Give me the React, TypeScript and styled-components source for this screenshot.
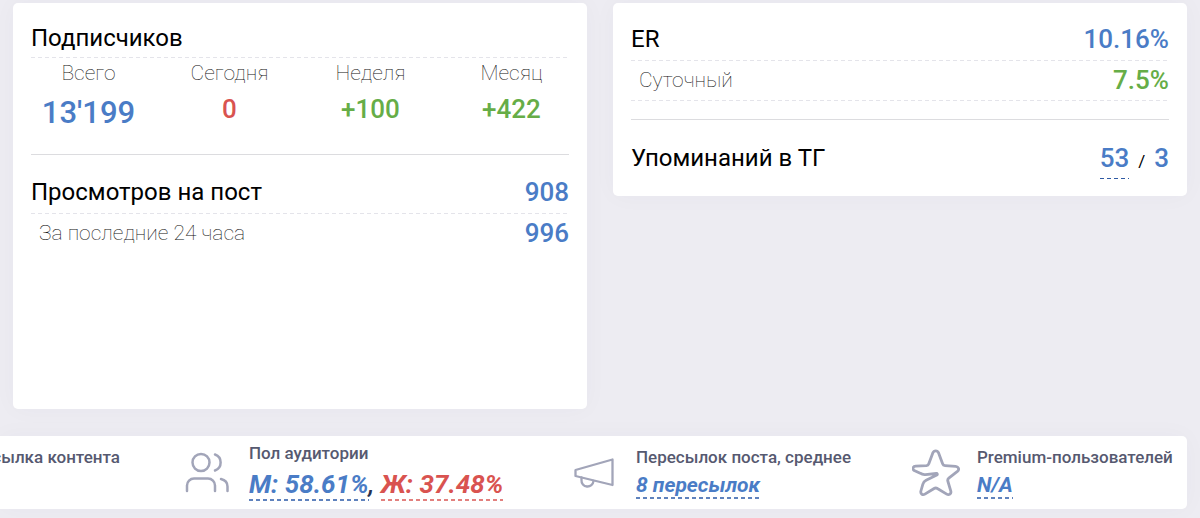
import React from "react";
import styled, { createGlobalStyle } from "styled-components";

const tones = {
  blue: "#4a7cc6",
  red: "#d95350",
  green: "#66ad47",
};
type Tone = keyof typeof tones;

const GlobalStyle = createGlobalStyle`
  *, *::before, *::after { box-sizing: border-box; }
  body {
    margin: 0;
    background: #edecf2;
    color: #000;
    font-family: Roboto, "Liberation Sans", sans-serif;
    overflow-x: hidden;
  }
  h2, p { margin: 0; font-weight: 400; }
  a { color: inherit; text-decoration: none; }
`;

const Page = styled.main`
  padding: 3px 13px 9px 0;
`;

const Cards = styled.div`
  display: grid;
  grid-template-columns: 1fr 1fr;
  gap: 26px;
  align-items: start;
  padding-left: 13px;
`;

const Card = styled.section<{ $minHeight?: number }>`
  min-height: ${(p) => p.$minHeight ?? 0}px;
  padding: 16px 18px;
  background: #fff;
  border-radius: 5px;
  box-shadow: 0 0 24px rgba(60, 50, 90, 0.03);
`;

const dashes = (color: string, thickness = 1) => `
  background-image: repeating-linear-gradient(90deg, ${color} 0 4px, transparent 4px 7px);
  background-size: 100% ${thickness}px;
  background-position: left bottom;
  background-repeat: no-repeat;
`;

const Row = styled.div<{ $height: number; $dashed?: boolean; $inset?: boolean }>`
  display: flex;
  justify-content: space-between;
  align-items: center;
  height: ${(p) => p.$height}px;
  padding: 0 0 2px ${(p) => (p.$inset ? 8 : 0)}px;
  ${(p) => p.$dashed && dashes("#e4e4ea")}
`;

const Title = styled.h2`
  font-size: 24px;
  line-height: 32px;
`;

const Label = styled.p`
  color: #111;
  font-size: 21px;
  font-weight: 100;
  line-height: 26px;
`;

const Value = styled.strong<{ $tone: Tone; $big?: boolean }>`
  color: ${(p) => tones[p.$tone]};
  font-size: ${(p) => (p.$big ? 31 : 26)}px;
  font-weight: 500;
  line-height: ${(p) => (p.$big ? 40 : 32)}px;
`;

const Stats = styled.div`
  display: grid;
  grid-template-columns: repeat(4, 1fr);
  margin: 2px -13px 0;
`;

const Stat = styled.div`
  display: flex;
  flex-direction: column;
  align-items: center;
  gap: 7px;
`;

const Divider = styled.hr<{ $above: number; $below: number }>`
  height: 1px;
  margin: ${(p) => p.$above}px 0 ${(p) => p.$below}px;
  border: 0;
  background: #dcdcdf;
`;

const Mentions = styled.div`
  display: flex;
  align-items: baseline;
  gap: 9px;
  font-size: 17px;
`;

const linkTones: Record<Tone, string> = {
  blue: "#5f82bd",
  red: "#e2807e",
  green: "#66ad47",
};

const MentionLink = styled.a`
  padding-bottom: 6px;
  ${dashes("#2f5aa3")}
`;

const Strip = styled.section`
  display: grid;
  grid-template-columns: minmax(0, 185fr) minmax(0, 389fr) minmax(0, 338fr) minmax(0, 275fr);
  height: 73px;
  margin-top: 27px;
  background: #fff;
  border-radius: 0 5px 5px 0;
  overflow: hidden;
  box-shadow: 0 0 24px rgba(60, 50, 90, 0.03);
`;

const Item = styled.div<{ $end?: boolean }>`
  display: flex;
  align-items: center;
  justify-content: ${(p) => (p.$end ? "flex-end" : "flex-start")};
  padding-right: ${(p) => (p.$end ? 65 : 0)}px;
  white-space: nowrap;
`;

const Icon = styled.svg<{ $gap: number }>`
  flex: none;
  margin-right: ${(p) => p.$gap}px;
  fill: none;
  stroke: #a2a5b9;
  stroke-linecap: round;
  stroke-linejoin: round;
`;

const ItemText = styled.div<{ $large?: boolean }>`
  align-self: flex-start;
  padding-top: ${(p) => (p.$large ? 7 : 11)}px;
  font-size: ${(p) => (p.$large ? 26 : 21)}px;
  line-height: ${(p) => (p.$large ? 30 : 24)}px;
  font-style: italic;
  font-weight: 500;
  color: #283252;
`;

const ItemLabel = styled.p`
  margin-bottom: 6px;
  color: #565970;
  font-size: 17px;
  font-style: normal;
  font-weight: 500;
  line-height: 20px;
`;

const ItemLink = styled.a<{ $tone: Tone }>`
  padding-bottom: 2px;
  color: ${(p) => tones[p.$tone]};
  font-weight: 700;
  ${(p) => dashes(linkTones[p.$tone], 2)}
`;

export default function App() {
  return (
    <Page>
      <GlobalStyle />
      <Cards>
        <Card $minHeight={406}>
          <Row $height={39} $dashed>
            <Title>Подписчиков</Title>
          </Row>
          <Stats>
            <Stat><Label>Всего</Label><Value $tone="blue" $big>13'199</Value></Stat>
            <Stat><Label>Сегодня</Label><Value $tone="red">0</Value></Stat>
            <Stat><Label>Неделя</Label><Value $tone="green">+100</Value></Stat>
            <Stat><Label>Месяц</Label><Value $tone="green">+422</Value></Stat>
          </Stats>
          <Divider $above={21} $below={17} />
          <Row $height={42} $dashed>
            <Title>Просмотров на пост</Title>
            <Value $tone="blue">908</Value>
          </Row>
          <Row $height={40} $inset>
            <Label>За последние 24 часа</Label>
            <Value $tone="blue">996</Value>
          </Row>
        </Card>
        <Card>
          <Row $height={42} $dashed>
            <Title>ER</Title>
            <Value $tone="blue">10.16%</Value>
          </Row>
          <Row $height={40} $dashed $inset>
            <Label>Суточный</Label>
            <Value $tone="green">7.5%</Value>
          </Row>
          <Divider $above={18} $below={17} />
          <Row $height={43}>
            <Title>Упоминаний в ТГ</Title>
            <Mentions>
              <Value $tone="blue"><MentionLink href="#mentions">53</MentionLink></Value>
              <span>/</span>
              <Value $tone="blue">3</Value>
            </Mentions>
          </Row>
        </Card>
      </Cards>
      <Strip>
        <Item $end>
          <ItemText>
            <ItemLabel>Пересылка контента</ItemLabel>
          </ItemText>
        </Item>
        <Item>
          <Icon $gap={20} width="44" height="41" viewBox="0 0 44 41" strokeWidth="2.5">
            <circle cx="16" cy="10.500" r="8.500" />
            <path d="M30 2.500a8.500 8.500 0 0 1 0 16" />
            <path d="M2 39v-5.500a7 7 0 0 1 7-7h14a7 7 0 0 1 7 7V39" />
            <path d="M36 27c4 1 6.500 3.500 6.500 7.500V39" />
          </Icon>
          <ItemText $large>
            <ItemLabel>Пол аудитории</ItemLabel>
            <ItemLink $tone="blue" href="#male">М: 58.61%</ItemLink>,{" "}
            <ItemLink $tone="red" href="#female">Ж: 37.48%</ItemLink>
          </ItemText>
        </Item>
        <Item>
          <Icon $gap={22} width="40" height="32" viewBox="0 0 40 32" strokeWidth="2.300">
            <path d="M1.500 13 38.500 2.500v25.500L1.500 19z" />
            <path d="M7.500 20.500v2.500a6 6 0 0 0 12 1" />
          </Icon>
          <ItemText>
            <ItemLabel>Пересылок поста, среднее</ItemLabel>
            <ItemLink $tone="blue" href="#forwards">8 пересылок</ItemLink>
          </ItemText>
        </Item>
        <Item>
          <Icon $gap={17} width="48" height="48" viewBox="0 0 48 48" strokeWidth="2.800">
            <path d="M20.800 3.900c1.200-2.800 4.600-2.800 5.800 0l4 10.900c.4 1.100 1.200 1.700 2.400 1.800l10.700.7c2.900.3 3.900 3.300 1.700 5.100l-8.600 6.700c-1 .8-1.300 1.700-1 2.900l3 10.100c.7 2.600-1.800 4.400-4.100 3l-9.300-5.600c-1.100-.7-2.200-.7-3.300 0l-9.200 5.600c-2.400 1.400-4.700-.5-4-3.100l1.900-6.700c.5-1.900 1.600-3.100 3.300-4l10.700-5.300c.9-.5.500-1.600-.5-1.500l-10.900 1.100c-2 .2-3.600-.2-5.200-1.400L2.200 21.500C-.1 19.900 1 17.400 3.700 17.200l10.700-.6c1.200-.1 2-.7 2.400-1.800z" />
          </Icon>
          <ItemText>
            <ItemLabel>Premium-пользователей</ItemLabel>
            <ItemLink $tone="blue" href="#premium">N/A</ItemLink>
          </ItemText>
        </Item>
      </Strip>
    </Page>
  );
}
